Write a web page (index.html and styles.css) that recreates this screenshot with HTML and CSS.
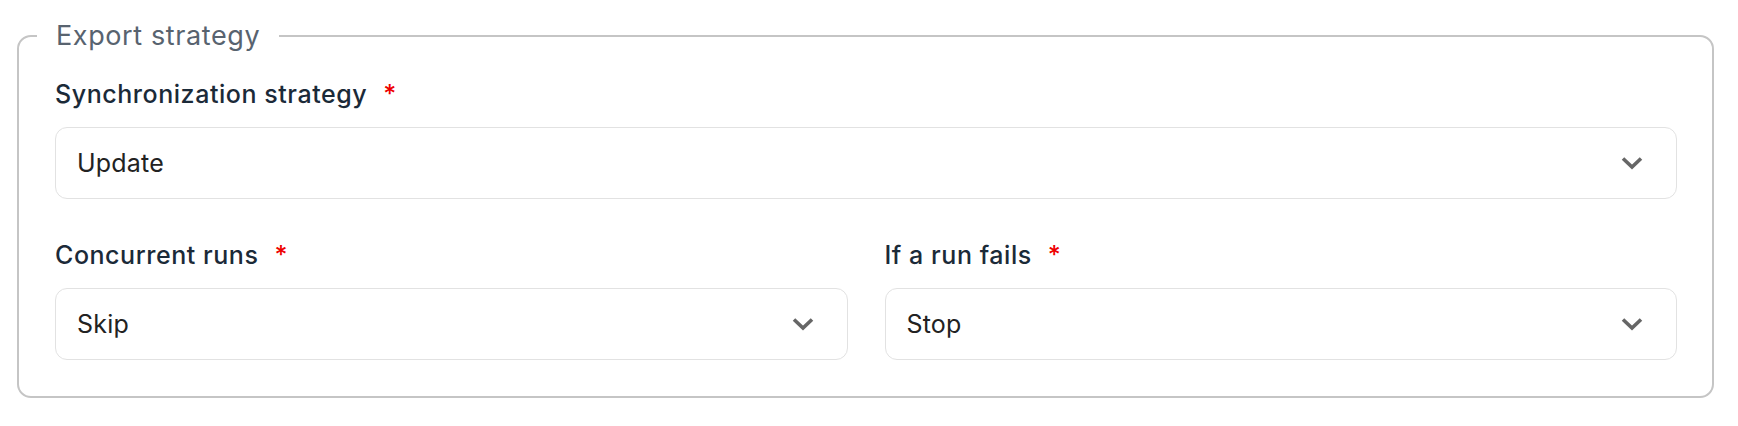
FILE: index.html
```html
<!DOCTYPE html>
<html lang="en">
<head>
<meta charset="utf-8">
<title>Export strategy</title>
<link rel="stylesheet" href="styles.css">
</head>
<body>
<fieldset class="group">
  <legend class="group-title">Export strategy</legend>
  <div class="field">
    <label class="field-label">Synchronization strategy<span class="req">*</span></label>
    <div class="select">
      <span class="select-value">Update</span>
      <svg class="chevron" viewBox="0 0 22 14" width="22" height="14"><path d="M2 2.5 L11 11 L20 2.5" fill="none" stroke="#666666" stroke-width="3.6"/></svg>
    </div>
  </div>
  <div class="row">
    <div class="field">
      <label class="field-label">Concurrent runs<span class="req">*</span></label>
      <div class="select">
        <span class="select-value">Skip</span>
        <svg class="chevron" viewBox="0 0 22 14" width="22" height="14"><path d="M2 2.5 L11 11 L20 2.5" fill="none" stroke="#666666" stroke-width="3.6"/></svg>
      </div>
    </div>
    <div class="field">
      <label class="field-label">If a run fails<span class="req">*</span></label>
      <div class="select">
        <span class="select-value">Stop</span>
        <svg class="chevron" viewBox="0 0 22 14" width="22" height="14"><path d="M2 2.5 L11 11 L20 2.5" fill="none" stroke="#666666" stroke-width="3.6"/></svg>
      </div>
    </div>
  </div>
</fieldset>
</body>
</html>
```
FILE: styles.css
```css
html, body {
  margin: 0;
  padding: 0;
  background: #ffffff;
}
body {
  font-family: Inter, "Noto Sans", sans-serif;
}
.group {
  margin: 20px 24px 0 17px;
  padding: 27px 35px 36px 36px;
  border: 2px solid #c5c5c5;
  border-radius: 14px;
  display: flex;
  flex-direction: column;
  gap: 41px;
  min-width: 0;
}
.group-title {
  font-size: 27px;
  line-height: 32px;
  letter-spacing: 0.6px;
  color: #58636f;
  padding: 0 19px;
  margin-left: -18px;
}
.field {
  display: flex;
  flex-direction: column;
  gap: 18px;
  min-width: 0;
}
.field-label {
  font-size: 25px;
  line-height: 30px;
  font-weight: 500;
  letter-spacing: 0.55px;
  color: #1b2a38;
}
.req {
  color: #ee0000;
  margin-left: 16px;
  font-weight: 500;
  letter-spacing: 0;
}
.row {
  display: grid;
  grid-template-columns: 1fr 1fr;
  column-gap: 37px;
}
.select {
  height: 72px;
  box-sizing: border-box;
  border: 1px solid #e2e2e2;
  border-radius: 12px;
  display: flex;
  align-items: center;
  justify-content: space-between;
  padding: 0 33px 0 21px;
}
.select-value {
  font-size: 25px;
  line-height: 30px;
  letter-spacing: 0.2px;
  color: #222222;
}
.chevron {
  display: block;
}
```
